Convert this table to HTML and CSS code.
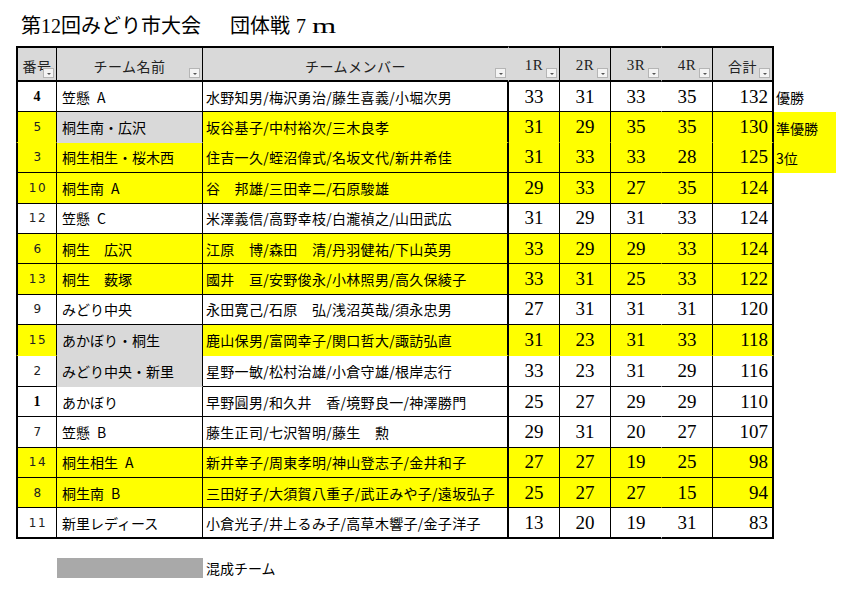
FILE: index.html
```html
<!DOCTYPE html>
<html lang="ja">
<head>
<meta charset="utf-8">
<title>第12回みどり市大会 団体戦 7m</title>
<link rel="stylesheet" href="styles.css">
</head>
<body>
<div class="page">
  <h1 class="title"><span>第12回みどり市大会</span><span class="t2">団体戦</span><span class="t3">7<span class="m">m</span></span></h1>
  <table class="score">
    <colgroup>
      <col class="c-no"><col class="c-team"><col class="c-mem"><col class="c-r"><col class="c-r"><col class="c-r"><col class="c-r"><col class="c-sum"><col class="c-note">
    </colgroup>
    <thead>
      <tr>
        <th class="no">番号<i class="dd"></i></th>
        <th class="team-h">チーム名前<i class="dd"></i></th>
        <th class="mem mem-h">チームメンバー<i class="dd"></i></th>
        <th class="r">1R<i class="dd"></i></th>
        <th class="r">2R<i class="dd"></i></th>
        <th class="r r3">3R<i class="dd"></i></th>
        <th class="r">4R<i class="dd"></i></th>
        <th class="sum sum-h">合計<i class="dd"></i></th>
        <th class="note"></th>
      </tr>
    </thead>
    <tbody>
      <tr>
        <td class="no b">4</td><td class="team">笠懸&ensp;A</td><td class="mem">水野知男/梅沢勇治/藤生喜義/小堀次男</td>
        <td class="r">33</td><td class="r">31</td><td class="r r3">33</td><td class="r">35</td><td class="sum">132</td><td class="note">優勝</td>
      </tr>
      <tr class="y joined">
        <td class="no">5</td><td class="team g">桐生南・広沢</td><td class="mem">坂谷基子/中村裕次/三木良孝</td>
        <td class="r">31</td><td class="r">29</td><td class="r r3">35</td><td class="r">35</td><td class="sum">130</td><td class="note yn">準優勝</td>
      </tr>
      <tr class="y">
        <td class="no">3</td><td class="team">桐生相生・桜木西</td><td class="mem">住吉一久/蛭沼偉式/名坂文代/新井希佳</td>
        <td class="r">31</td><td class="r">33</td><td class="r r3">33</td><td class="r">28</td><td class="sum">125</td><td class="note yn">3位</td>
      </tr>
      <tr class="y">
        <td class="no">10</td><td class="team">桐生南&ensp;A</td><td class="mem">谷　邦雄/三田幸二/石原駿雄</td>
        <td class="r">29</td><td class="r">33</td><td class="r r3">27</td><td class="r">35</td><td class="sum">124</td><td class="note"></td>
      </tr>
      <tr>
        <td class="no">12</td><td class="team">笠懸&ensp;C</td><td class="mem">米澤義信/高野幸枝/白瀧禎之/山田武広</td>
        <td class="r">31</td><td class="r">29</td><td class="r r3">31</td><td class="r">33</td><td class="sum">124</td><td class="note"></td>
      </tr>
      <tr class="y">
        <td class="no">6</td><td class="team">桐生　広沢</td><td class="mem">江原　博/森田　清/丹羽健祐/下山英男</td>
        <td class="r">33</td><td class="r">29</td><td class="r r3">29</td><td class="r">33</td><td class="sum">124</td><td class="note"></td>
      </tr>
      <tr class="y">
        <td class="no">13</td><td class="team">桐生　薮塚</td><td class="mem">國井　亘/安野俊永/小林照男/高久保綾子</td>
        <td class="r">33</td><td class="r">31</td><td class="r r3">25</td><td class="r">33</td><td class="sum">122</td><td class="note"></td>
      </tr>
      <tr>
        <td class="no">9</td><td class="team">みどり中央</td><td class="mem">永田寛己/石原　弘/浅沼英哉/須永忠男</td>
        <td class="r">27</td><td class="r">31</td><td class="r r3">31</td><td class="r">31</td><td class="sum">120</td><td class="note"></td>
      </tr>
      <tr class="y joined">
        <td class="no">15</td><td class="team g pair" rowspan="2"><span class="ln">あかぼり・桐生</span><span class="ln">みどり中央・新里</span></td><td class="mem">鹿山保男/富岡幸子/関口哲大/諏訪弘直</td>
        <td class="r">31</td><td class="r">23</td><td class="r r3">31</td><td class="r">33</td><td class="sum">118</td><td class="note"></td>
      </tr>
      <tr>
        <td class="no">2</td><td class="mem">星野一敏/松村治雄/小倉守雄/根岸志行</td>
        <td class="r">33</td><td class="r">23</td><td class="r r3">31</td><td class="r">29</td><td class="sum">116</td><td class="note"></td>
      </tr>
      <tr>
        <td class="no b">1</td><td class="team">あかぼり</td><td class="mem">早野圓男/和久井　香/境野良一/神澤勝門</td>
        <td class="r">25</td><td class="r">27</td><td class="r r3">29</td><td class="r">29</td><td class="sum">110</td><td class="note"></td>
      </tr>
      <tr>
        <td class="no">7</td><td class="team">笠懸&ensp;B</td><td class="mem">藤生正司/七沢智明/藤生　勲</td>
        <td class="r">29</td><td class="r">31</td><td class="r r3">20</td><td class="r">27</td><td class="sum">107</td><td class="note"></td>
      </tr>
      <tr class="y">
        <td class="no">14</td><td class="team">桐生相生&ensp;A</td><td class="mem">新井幸子/周東孝明/神山登志子/金井和子</td>
        <td class="r">27</td><td class="r">27</td><td class="r r3">19</td><td class="r">25</td><td class="sum">98</td><td class="note"></td>
      </tr>
      <tr class="y">
        <td class="no">8</td><td class="team">桐生南&ensp;B</td><td class="mem">三田好子/大須賀八重子/武正みや子/遠坂弘子</td>
        <td class="r">25</td><td class="r">27</td><td class="r r3">27</td><td class="r">15</td><td class="sum">94</td><td class="note"></td>
      </tr>
      <tr class="last">
        <td class="no">11</td><td class="team">新里レディース</td><td class="mem">小倉光子/井上るみ子/高草木響子/金子洋子</td>
        <td class="r">13</td><td class="r">20</td><td class="r r3">19</td><td class="r">31</td><td class="sum">83</td><td class="note"></td>
      </tr>
    </tbody>
  </table>
  <div class="legend"><span class="swatch"></span><span class="legend-text">混成チーム</span></div>
</div>
</body>
</html>
```
FILE: styles.css
```css
* { box-sizing: border-box; }
html, body { margin: 0; padding: 0; background: #fff; }
body {
  font-family: "Noto Sans CJK JP", "Noto Sans", sans-serif;
  color: #000;
}
.page { padding: 11px 0 0 16px; }

.title {
  margin: 0 0 0 5px;
  height: 35px;
  display: flex;
  align-items: baseline;
  font-family: "Liberation Serif", "Noto Sans CJK JP", serif;
  font-size: 20px;
  font-weight: normal;
  line-height: 31px;
}
.title .t2 { margin-left: 29px; }
.title .t3 { margin-left: 6px; }
.title .m { display: inline-block; margin-left: 6px; transform: scaleX(1.55); transform-origin: left; }

.score {
  border-collapse: separate;
  border-spacing: 0;
  table-layout: fixed;
  width: 818px;
}
.c-no { width: 41px; }
.c-team { width: 146px; }
.c-mem { width: 306px; }
.c-r { width: 51px; }
.c-sum { width: 61px; }
.c-note { width: 62px; }

.score th, .score td {
  padding: 0;
  border-right: 1px solid #000;
  border-bottom: 1px solid #000;
  white-space: nowrap;
  overflow: hidden;
}
.score td { height: 30.4px; vertical-align: middle; }
.score th {
  position: relative;
  height: 36px;
  background: #d9d9d9;
  border-top: 2px solid #000;
  border-bottom: 2px solid #000;
  font-weight: normal;
  font-size: 14px;
  color: #222;
  text-align: center;
  vertical-align: middle;
  padding-top: 3px;
  letter-spacing: 0.5px;
}
.score .no { border-left: 2px solid #000; }
.score th.mem-h { border-right-color: transparent; }
.score td.mem { border-right-width: 2px; }
.score .r3 { border-right-color: transparent; }
.score .sum { border-right-width: 2px; }
.score .note {
  border: none;
  background: transparent;
  padding-left: 2px;
  font-size: 14px;
  text-align: left;
}
.score tr.last td { border-bottom-width: 2px; }
.score tr.last td.note { border-bottom: none; }
.score tr.joined td { border-bottom-color: transparent; }

.score th.r { font-family: "Liberation Serif", "Noto Sans CJK JP", serif; font-size: 15px; }
.score th.sum-h { font-family: "Noto Sans CJK JP", sans-serif; font-size: 14px; }

.dd {
  position: absolute;
  right: 2px;
  bottom: 2px;
  width: 11px;
  height: 10px;
  background: #f4f4f4;
  border: 1px solid #b5b5b5;
}
.dd::after {
  content: "";
  position: absolute;
  left: 3px;
  top: 4px;
  border-left: 2px solid transparent;
  border-right: 2px solid transparent;
  border-top: 2px solid #555;
}

.score td.no {
  text-align: center;
  font-family: "DejaVu Sans", sans-serif;
  font-size: 12px;
  letter-spacing: 1.5px;
  color: #222;
  padding-left: 2px;
}
.score td.no.b {
  font-family: "Liberation Serif", serif;
  font-weight: bold;
  font-size: 14px;
  letter-spacing: 0;
  color: #000;
  padding-left: 0;
}
.score td.team { font-size: 14px; padding-left: 5px; }
.score td.pair { vertical-align: top; padding-top: 0; }
.score td.pair .ln { display: block; height: 30.4px; line-height: 30px; }
.score td.mem { font-size: 14px; padding-left: 3px; letter-spacing: 0.3px; }
.score td.r {
  text-align: center;
  font-family: "Liberation Serif", serif;
  font-size: 19px;
}
.score td.sum {
  text-align: right;
  padding-right: 4px;
  font-family: "Liberation Serif", serif;
  font-size: 19px;
}

.score tr.y td { background: #ffff00; }
.score tr.y td.note { background: transparent; }
.score tr.y td.note.yn { background: #ffff00; }
.score td.g, .score tr.y td.g { background: #d9d9d9; }

.legend {
  display: flex;
  align-items: center;
  margin: 19px 0 0 41px;
}
.swatch { width: 146px; height: 20px; background: #a9a9a9; }
.legend-text { margin-left: 3px; font-size: 14px; line-height: 20px; }
```
